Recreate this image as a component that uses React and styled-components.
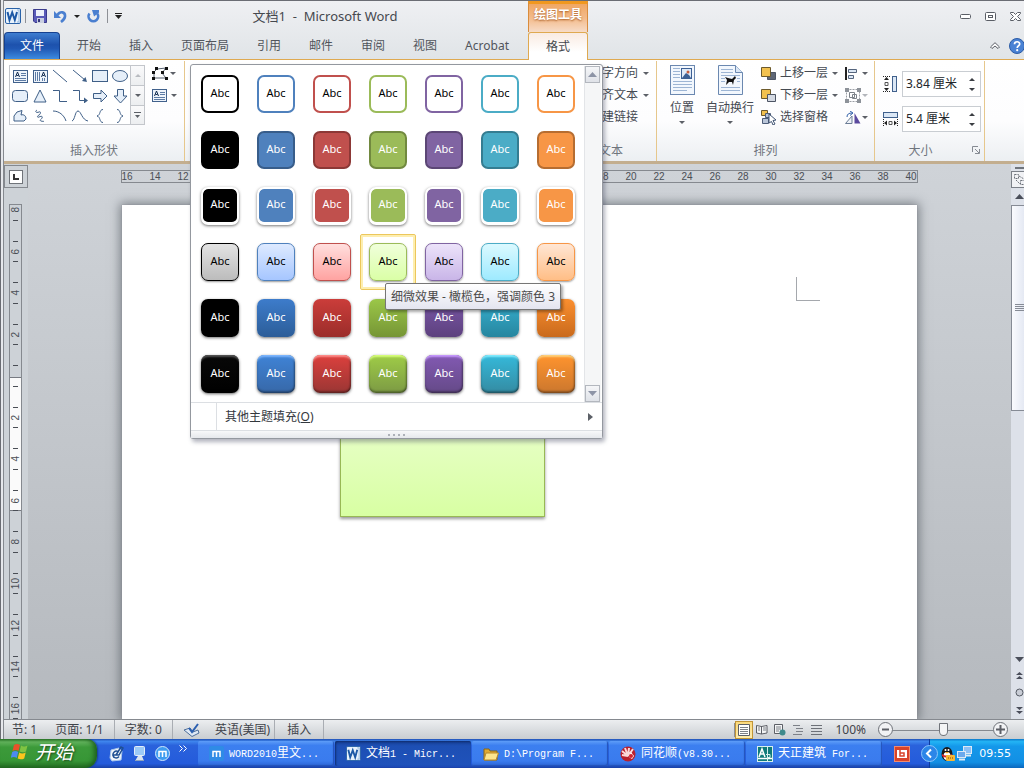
import React from "react";
import styled, { createGlobalStyle, css } from "styled-components";

const Global = createGlobalStyle`
  *, *::before, *::after { box-sizing: border-box; }
  html, body, #root { height: 100%; margin: 0; }
  body {
    font: 12px/16px "Noto Sans", "Noto Sans CJK SC", sans-serif;
    color: #3c4148;
    overflow: hidden;
  }
  button, input { font: inherit; color: inherit; }
  button { background: none; border: 0; padding: 0; cursor: default; white-space: nowrap; }
  svg { display: block; flex: none; }
`;

const Screen = styled.div`
  display: flex;
  flex-direction: column;
  height: 100vh;
`;

const WordWindow = styled.div`
  position: relative;
  flex: 1;
  min-height: 0;
  display: flex;
  flex-direction: column;
  padding-left: 4px;
  background: linear-gradient(to right, #6a6c72 0 1px, #e6e8ec 1px 3px, #85898f 3px 4px, #c4c8cd 4px);
`;

/* ---------- title bar and tabs ---------- */

const Header = styled.header`
  display: flex;
  height: 60px;
  flex: none;
  border-top: 1px solid #6b6d74;
  border-bottom: 1px solid #dfa950;
  background: linear-gradient(#eff0f3, #e0e4e7);
`;

const HeaderMain = styled.div`
  display: flex;
  flex-direction: column;
  width: 524px;
`;

const TitleRow = styled.div`
  display: flex;
  align-items: center;
  height: 31px;
  padding-bottom: 1px;
`;

const QuickAccess = styled.div`
  display: flex;
  align-items: center;
  gap: 7px;
  width: 118px;
  padding-left: 1px;
`;

const AppMark = styled.span`
  display: flex;
  align-items: center;
  gap: 4px;
`;

const Divider = styled.span`
  width: 1px;
  height: 14px;
  background: #8d9096;
`;

const DocTitle = styled.h1`
  flex: 1;
  margin: 0;
  font-size: 13px;
  font-weight: 400;
  line-height: 20px;
  text-align: center;
  white-space: pre;
  color: #45484e;
`;

const TabRow = styled.nav`
  display: flex;
  align-items: stretch;
  height: 27px;
`;

const FileTab = styled.button`
  width: 56px;
  margin-right: 3px;
  border: 1px solid #15408f;
  border-bottom: 0;
  border-radius: 4px 4px 0 0;
  background: linear-gradient(#3e7dd0, #1d52ad 45%, #2058b4 60%, #3d8be0);
  color: #fff;
`;

const Tab = styled.button`
  padding: 0 14px;
  color: #51555c;
`;

const ContextGroup = styled.div`
  display: flex;
  flex-direction: column;
  width: 60px;
  margin-bottom: -1px;
`;

const ContextTitle = styled.div`
  height: 31px;
  border: solid #d98c3c;
  border-width: 0 1px;
  border-top: 3px solid #f0981f;
  background: linear-gradient(#f0a763, #f3bb8b 50%, #f7dcc8);
  color: #fff;
  font-weight: 700;
  line-height: 21px;
  text-align: center;
  text-shadow: 0 1px 2px #a85a20;
`;

const ContextTab = styled.button`
  flex: 1;
  border: 1px solid #dfa950;
  border-bottom: 0;
  border-radius: 3px 3px 0 0;
  background: linear-gradient(#f9ebe2, #fff 70%);
  color: #45484e;
`;

const HeaderControls = styled.div`
  flex: 1;
  display: flex;
  flex-direction: column;
`;

const ControlRow = styled.div`
  display: flex;
  justify-content: flex-end;
  align-items: center;
  height: ${(p) => p.$h}px;
  gap: ${(p) => p.$gap}px;
  padding-right: ${(p) => p.$right || 0}px;
`;

/* ---------- ribbon ---------- */

const Ribbon = styled.div`
  display: flex;
  flex: none;
  height: 104px;
  padding-top: 1px;
  border-bottom: 3px solid #c3ae8f;
  background: linear-gradient(#fff, #fdfdfe 60%, #eceff2);
`;

const Group = styled.section`
  display: flex;
  flex-direction: column;
  width: ${(p) => p.$w}px;
  border-right: 1px solid #e6c78c;
`;

const GroupBody = styled.div`
  flex: 1;
  display: flex;
  padding: ${(p) => p.$pad || "1px 5px 0"};
  gap: ${(p) => p.$gap || 0}px;
  justify-content: ${(p) => p.$justify || "flex-start"};
`;

const GroupLabel = styled.div`
  position: relative;
  height: 22px;
  line-height: 24px;
  text-align: ${(p) => p.$align || "center"};
  color: #6f757d;
  padding-right: ${(p) => p.$right || 0}px;
`;

const Launcher = styled.button`
  position: absolute;
  right: 4px;
  top: 7px;
`;

const ShapeBox = styled.div`
  display: flex;
  height: 60px;
  margin-top: 3px;
  border: 1px solid #c3c6cb;
  background: #fff;
`;

const ShapeGrid = styled.div`
  display: grid;
  grid-template-columns: repeat(6, 20px);
  grid-auto-rows: 20px;
`;

const ShapeButton = styled.button`
  display: grid;
  place-items: center;
`;

const ShapeScroll = styled.div`
  display: grid;
  grid-template-rows: repeat(3, 1fr);
  width: 14px;
  border-left: 1px solid #c3c6cb;
  button { display: grid; place-items: center; background: linear-gradient(#fafafb, #eceef0); }
  button + button { border-top: 1px solid #c3c6cb; }
`;

const Stack = styled.div`
  display: flex;
  flex-direction: column;
  gap: ${(p) => p.$gap || 0}px;
`;

const CommandStack = styled(Stack)`
  margin-left: 7px;
`;

const SmallButton = styled.button`
  display: flex;
  align-items: center;
  height: 22px;
  gap: ${(p) => p.$gap || 4}px;
  color: #454a52;
`;

const BigButton = styled.button`
  display: flex;
  flex-direction: column;
  align-items: center;
  width: 48px;
  padding-top: 3px;
  gap: 5px;
  color: #454a52;
`;

const SizeField = styled.label`
  display: flex;
  align-items: center;
  gap: 4px;
  height: 26px;
`;

const SpinBox = styled.span`
  display: flex;
  align-items: stretch;
  width: 79px;
  height: 26px;
  border: 1px solid #c9cdd2;
  background: #fff;
  input {
    width: 60px;
    border: 0;
    padding: 0 0 0 3px;
    background: none;
    outline: 0;
    color: #22252a;
  }
`;

const SpinArrows = styled.span`
  flex: 1;
  display: flex;
  flex-direction: column;
  align-items: center;
  justify-content: center;
  gap: 7px;
`;

/* ---------- document area ---------- */

const Workspace = styled.main`
  position: relative;
  flex: 1;
  min-height: 0;
  display: flex;
  background: linear-gradient(#cfd3d8, #b5b9be);
`;

const RulerColumn = styled.div`
  display: flex;
  flex-direction: column;
  width: 24px;
  flex: none;
  background: #cdd2d7;
`;

const TabSelector = styled.button`
  display: grid;
  place-items: center;
  width: 24px;
  height: 23px;
  margin: 1px 0 16px;
  flex: none;
  border: 1px solid #85898f;
  span {
    display: grid;
    place-items: center;
    width: 14px;
    height: 14px;
    border: 1px solid #70747a;
    background: #fff;
  }
`;

const VRuler = styled.div`
  flex: 1;
  min-height: 0;
  width: 13px;
  margin-left: 5px;
  overflow: hidden;
  border: 1px solid #85898f;
  border-bottom: 0;
  background: linear-gradient(
    transparent 172px, #777b82 172px 173px, #fafafa 173px 305px, #777b82 305px 306px, transparent 306px
  );
`;

const VScale = styled.div`
  display: flex;
  flex-direction: column;
  height: 540px;
  margin-top: -16px;
`;

const VUnit = styled.div`
  flex: 1;
  display: flex;
  flex-direction: column;
  align-items: center;
  justify-content: space-between;
  padding: 10px 0;
  font: 10px/11px "Liberation Sans", sans-serif;
  color: #4a4e55;
  i { width: 5px; height: 1px; background: #4a4e55; }
  span { writing-mode: vertical-rl; transform: rotate(180deg); margin: -4px 0; }
`;

const Canvas = styled.div`
  flex: 1;
  min-width: 0;
  display: flex;
  flex-direction: column;
  align-items: center;
  padding-top: 6px;
  overflow: hidden;
`;

const HRuler = styled.div`
  display: flex;
  justify-content: center;
  width: 797px;
  height: 13px;
  flex: none;
  padding-right: 1px;
  overflow: hidden;
  border: 1px solid #85898f;
  font: 10px/11px "Liberation Sans", sans-serif;
  color: #4a4e55;
  span { flex: none; width: 28px; text-align: center; }
`;

const Page = styled.article`
  position: relative;
  flex: 1;
  width: 795px;
  margin-top: 22px;
  background: #fff;
  box-shadow: 0 0 1px #80858c, 0 0 10px 2px rgba(70, 76, 84, 0.6);
`;

const DrawnShape = styled.div`
  position: absolute;
  left: 218px;
  top: 166px;
  width: 205px;
  height: 146px;
  border: 1px solid #98b855;
  background: linear-gradient(#f1ffdd, #d8ffa3);
  box-shadow: 0 2px 3px rgba(0, 0, 0, 0.4);
`;

const MarginCorner = styled.div`
  position: absolute;
  right: 97px;
  top: 72px;
  width: 24px;
  height: 24px;
  border: solid #a5a8ad;
  border-width: 0 0 1px 1px;
`;

const ScrollColumn = styled.div`
  display: flex;
  flex-direction: column;
  align-items: center;
  width: 13px;
  flex: none;
  overflow: hidden;
  background: #dde1e9;
  padding-top: 3px;
`;

const SplitHandle = styled.div`
  width: 9px;
  height: 2px;
  margin-left: 4px;
  background: #70757d;
`;

const RulerToggle = styled.button`
  width: 17px;
  height: 17px;
  margin: 2px -4px 0 0;
  flex: none;
  border: 1px solid #7b8088;
  background: #f1f2f5;
`;

const ScrollButton = styled.button`
  display: grid;
  place-items: center;
  flex: none;
  height: ${(p) => p.$h || 17}px;
  width: 17px;
  margin-right: -4px;
`;

const Thumb = styled.div`
  display: grid;
  place-items: center;
  width: 17px;
  height: 206px;
  margin-right: -4px;
  flex: none;
  border: 1px solid #868b95;
  background: linear-gradient(to right, #fafbfe, #dfe4f0);
`;

const Spacer = styled.div`
  flex: 1;
`;

/* ---------- style gallery ---------- */

const Popup = styled.div`
  position: absolute;
  left: 190px;
  top: 64px;
  width: 413px;
  border: 1px solid #94989f;
  border-radius: 3px;
  background: #fff;
  box-shadow: 2px 3px 4px rgba(60, 64, 90, 0.4);
`;

const GalleryBody = styled.div`
  display: flex;
  padding: 1px 1px 0;
  border-bottom: 1px solid #dcdfe3;
`;

const SwatchGrid = styled.div`
  display: grid;
  grid-template-columns: repeat(7, 56px);
  grid-auto-rows: 56px;
  flex: none;
`;

const Cell = styled.div`
  display: grid;
  place-items: center;
  ${(p) =>
    p.$hot &&
    css`
      border: 1px solid #ecc75c;
      border-radius: 2px;
      box-shadow: inset 0 0 0 2px #fdeeb0;
    `}
`;

const rowStyles = {
  outline: css`
    background: #fff;
    border: 2px solid ${(p) => p.$c.base};
    color: #000;
  `,
  solid: css`
    background: ${(p) => p.$c.base};
    border: 2px solid ${(p) => p.$c.dark};
  `,
  framed: css`
    background: ${(p) => p.$c.base};
    border: 2px solid #fff;
    border-width: 2px 2px 3px;
    background-clip: padding-box;
    box-shadow: 0 1px 3px rgba(0, 0, 0, 0.55);
  `,
  subtle: css`
    background: linear-gradient(${(p) => p.$c.l1}, ${(p) => p.$c.l2});
    border: 1px solid ${(p) => p.$c.base};
    color: #000;
    box-shadow: 0 1px 2px rgba(0, 0, 0, 0.4);
  `,
  moderate: css`
    background: linear-gradient(${(p) => p.$c.m1}, ${(p) => p.$c.m2});
    box-shadow: 0 1px 3px rgba(0, 0, 0, 0.55);
  `,
  intense: css`
    background: linear-gradient(${(p) => p.$c.i1}, ${(p) => p.$c.i2});
    box-shadow: 0 1px 3px rgba(0, 0, 0, 0.6), inset 0 3px 2px -1px ${(p) => p.$c.hi},
      inset 0 -2px 2px rgba(0, 0, 0, 0.3), inset -1px 0 2px rgba(0, 0, 0, 0.35);
  `,
};

const Swatch = styled.button`
  width: 38px;
  height: 38px;
  border-radius: 7px;
  color: #fff;
  font: 11px/16px "Noto Sans", sans-serif;
  display: flex;
  justify-content: center;
  align-items: center;
  padding-bottom: 3px;
  ${(p) => rowStyles[p.$kind]}
`;

const GalleryScroll = styled.div`
  display: flex;
  flex-direction: column;
  justify-content: space-between;
  width: 17px;
  border-left: 1px solid #e3e5e8;
  background: #f5f6f7;
  button {
    display: grid;
    place-items: center;
    height: 17px;
    margin: 0 1px 0 0;
    border: 1px solid #b3b7be;
    background: linear-gradient(#f5f6f8, #dfe2e8);
  }
`;

const MenuItem = styled.button`
  display: flex;
  align-items: center;
  width: 100%;
  height: 27px;
  color: #33373d;
  i { width: 26px; height: 27px; border-right: 1px solid #dcdfe3; margin-right: 8px; }
  svg { margin: 0 9px 0 auto; }
`;

const Grip = styled.div`
  display: flex;
  align-items: center;
  justify-content: center;
  gap: 3px;
  height: 8px;
  border-top: 1px solid #dcdfe3;
  background: linear-gradient(#f7f8f9, #e6e8ec);
  i { width: 2px; height: 2px; background: #adb1b8; }
`;

const Tooltip = styled.div`
  position: absolute;
  left: 385px;
  top: 283px;
  padding: 4px 5px;
  border: 1px solid #767676;
  border-radius: 2px;
  background: linear-gradient(#fff, #e4e5f0);
  box-shadow: 2px 2px 3px rgba(0, 0, 0, 0.35);
  color: #4c4c4c;
  line-height: 17px;
  white-space: nowrap;
`;

/* ---------- status bar ---------- */

const StatusBar = styled.footer`
  display: flex;
  align-items: center;
  height: 20px;
  flex: none;
  border-top: 1px solid #85898f;
  background: linear-gradient(#eceef0, #c9cdd1);
  color: #3f434a;
`;

const StatusItem = styled.button`
  height: 19px;
  padding: 1px ${(p) => p.$pad || 10}px 0;
  border-right: ${(p) => (p.$line ? "1px solid #a9adb3" : "0")};
`;

const ViewButton = styled.button`
  display: grid;
  place-items: center;
  width: 18px;
  height: 18px;
  ${(p) =>
    p.$on &&
    css`
      border: 1px solid #c19537;
      background: linear-gradient(#fbd97c, #fcecae);
    `}
`;

const ZoomControl = styled.div`
  display: flex;
  align-items: center;
  margin-left: 2px;
  padding-right: 16px;
`;

const ZoomSlider = styled.input`
  appearance: none;
  width: 100px;
  height: 16px;
  margin: 0;
  background: linear-gradient(transparent 8px, #85898f 8px 9px, transparent 9px);
  &::-webkit-slider-thumb {
    appearance: none;
    width: 9px;
    height: 13px;
    border: 1px solid #70747a;
    border-radius: 1px 1px 5px 5px;
    background: #f4f5f6;
  }
`;

const RoundButton = styled.button`
  display: grid;
  place-items: center;
  width: 15px;
  height: 15px;
  border: 1px solid #6d7178;
  border-radius: 50%;
  background: #f1f2f4;
`;

/* ---------- taskbar ---------- */

const Taskbar = styled.div`
  display: flex;
  align-items: stretch;
  height: 29px;
  flex: none;
  background: linear-gradient(#1f4fb4, #3f86ee 8%, #2a62dc 22%, #245bdb 85%, #1a41a5);
  color: #fff;
`;

const StartButton = styled.button`
  display: flex;
  align-items: center;
  gap: 6px;
  width: 97px;
  padding: 0 0 3px 11px;
  border-radius: 0 10px 12px 0;
  background: linear-gradient(#2e7d2c, #62b35c 10%, #3c9a3a 28%, #379636 75%, #226a21);
  box-shadow: inset -4px 0 5px -1px #1d5f1d, 1px 0 2px #163c8f;
  font-size: 19px;
  font-style: italic;
  line-height: 26px;
  color: #fff;
  text-shadow: 1px 1px 2px #1c4a1b;
`;

const QuickLaunch = styled.div`
  display: flex;
  align-items: center;
  gap: 9px;
  width: 101px;
  padding-left: 12px;
`;

const MoreButton = styled.button`
  align-self: flex-start;
  margin-top: 6px;
`;

const Tasks = styled.div`
  flex: 1;
  display: flex;
  min-width: 0;
`;

const TaskButton = styled.button`
  flex: 0 1 136px;
  display: flex;
  align-items: center;
  gap: 5px;
  min-width: 0;
  height: 25px;
  margin: 2px 1px 0 0;
  padding-left: 11px;
  border-radius: 2px;
  background: ${(p) =>
    p.$on ? "linear-gradient(#173f95, #1d4fb4 20%, #1f52bb)" : "linear-gradient(#5e9df8, #3c7ff0 18%, #3a7bee 80%, #2c64d4)"};
  box-shadow: ${(p) => (p.$on ? "inset 1px 1px 2px #0f2d70" : "inset -1px -1px 1px #2453b8")};
  color: #fff;
  span { white-space: pre; }
  code { font: 10px/16px "Liberation Mono", monospace; }
`;

const InputMethod = styled.button`
  display: grid;
  place-items: center;
  width: 26px;
  margin-right: 14px;
`;

const Tray = styled.div`
  display: flex;
  align-items: center;
  gap: 2px;
  width: 95px;
  padding-right: 13px;
  border-left: 1px solid #0c3a9e;
  background: linear-gradient(#0d79c9, #23b4f5 9%, #1498ea 25%, #128fe4 80%, #0b67bd);
  button:first-child { margin-left: -9px; }
  time { margin-left: auto; font: 11px/16px "DejaVu Sans", sans-serif; }
`;

/* ---------- icons ---------- */

const Svg = ({ w, h, children }) => (
  <svg width={w} height={h} viewBox={`0 0 ${w} ${h}`} fill="none" aria-hidden="true">
    {children}
  </svg>
);

const Caret = ({ c = "#5c6067", big }) =>
  big ? (
    <Svg w={9} h={5}><path d="M0 0h9L4.500 5z" fill={c} /></Svg>
  ) : (
    <Svg w={6} h={3}><path d="M0 0h6L3 3z" fill={c} /></Svg>
  );
const CaretUp = ({ c = "#3a3d42", big }) =>
  big ? (
    <Svg w={9} h={5}><path d="M0 5h9L4.500 0z" fill={c} /></Svg>
  ) : (
    <Svg w={6} h={3}><path d="M0 3h6L3 0z" fill={c} /></Svg>
  );

const WordIcon = ({ s = 16 }) => (
  <svg width={s} height={s} viewBox="0 0 16 16" aria-hidden="true">
    <rect x=".5" y=".5" width="15" height="15" rx="1.500" fill="#e8f2fc" stroke="#2a62a8" />
    <path d="M12 2h2v12h-2" fill="none" stroke="#8fb4dc" />
    <path d="M2.500 4l2 8 2.700-7.500L9.800 12 12 4" fill="none" stroke="#1c58a6" strokeWidth="2" />
  </svg>
);

const SaveIcon = () => (
  <Svg w={14} h={14}>
    <path d="M.5.5h13v13H2l-1.500-1.500z" fill="#5a5bb8" stroke="#3b3b8c" />
    <rect x="3" y="1" width="8" height="6" fill="#eef2fb" />
    <rect x="4" y="9" width="7" height="5" fill="#c9cfe0" />
    <rect x="5" y="10" width="2" height="3" fill="#37377c" />
  </Svg>
);

const UndoIcon = () => (
  <Svg w={13} h={13}>
    <path d="M3.500 5C6 1 11.500 1.500 11 6.500c-.3 2.500-2 4-4 5.500" stroke="#4a7fd0" strokeWidth="2.600" />
    <path d="M0 1v7h7z" fill="#4a7fd0" />
  </Svg>
);

const RedoIcon = () => (
  <Svg w={13} h={13}>
    <path d="M2.500 3.500A4.800 4.800 0 1 0 10.200 3.500" stroke="#4a7fd0" strokeWidth="2.600" />
    <path d="M5 0h7v2.500L7 6.500z" fill="#4a7fd0" />
  </Svg>
);

const TextBoxIcon = ({ vertical }) => (
  <Svg w={15} h={13}>
    <rect x=".5" y=".5" width="14" height="12" fill="#eef4fb" stroke="#41618c" />
    {vertical ? (
      <>
        <path d="M2.500 2v9M4.500 2v9M6.500 2v9M9.500 8v3M11.500 8v3" stroke="#5d7ba4" />
        <path d="M8.500 7l2-5 2 5M9.500 5.500h2" stroke="#122c50" />
      </>
    ) : (
      <>
        <path d="M8 3.500h5M8 5.500h5M2 8.500h11M2 10.500h11" stroke="#5d7ba4" />
        <path d="M2.500 7l2-5 2 5M3.500 5.500h2" stroke="#122c50" />
      </>
    )}
  </Svg>
);

const S = "#3f5f87";
const F = "#e6eff9";
const shapes = [
  ["文本框", <TextBoxIcon />],
  ["竖排文本框", <TextBoxIcon vertical />],
  ["直线", <Svg w={16} h={16}><path d="M1 2l14 12" stroke={S} /></Svg>],
  ["箭头", <Svg w={16} h={16}><path d="M1 2l12 10" stroke={S} /><path d="M15 14l-5-1 3.500-4z" fill={S} /></Svg>],
  ["矩形", <Svg w={16} h={12}><rect x=".5" y=".5" width="15" height="11" fill={F} stroke={S} /></Svg>],
  ["椭圆", <Svg w={16} h={12}><ellipse cx="8" cy="6" rx="7.500" ry="5.500" fill={F} stroke={S} /></Svg>],
  ["圆角矩形", <Svg w={16} h={12}><rect x=".5" y=".5" width="15" height="11" rx="3" fill={F} stroke={S} /></Svg>],
  ["等腰三角形", <Svg w={14} h={14}><path d="M7 1l6 12H1z" fill={F} stroke={S} /></Svg>],
  ["肘形连接符", <Svg w={16} h={14}><path d="M1 1.500h6.500v11H15" stroke={S} /></Svg>],
  ["肘形箭头", <Svg w={16} h={14}><path d="M1 1.500h6.500v10H13" stroke={S} /><path d="M12 8.500l4 3-4 3z" fill={S} /></Svg>],
  ["右箭头", <Svg w={15} h={14}><path d="M.5 4.500H8V1l6 6-6 6V9.500H.5z" fill={F} stroke={S} /></Svg>],
  ["下箭头", <Svg w={15} h={15}><path d="M4.500.5h6V7H14l-6.500 7L1 7h3.500z" fill={F} stroke={S} /></Svg>],
  ["任意多边形", <Svg w={14} h={12}><path d="M1 11V6l3-4 5-1.500L8 5c3-1 5 1 5 4l-2 2z" fill={F} stroke={S} /></Svg>],
  ["自由曲线", <Svg w={12} h={14}><path d="M3 1c-3 2 0 3 2 2s2 2 0 3-2 3 0 2 4-1 3 1-3 2-1 3 3-1 2 1" stroke={S} /></Svg>],
  ["弧形", <Svg w={16} h={12}><path d="M1 1c6 0 11 4 13 10" stroke={S} /></Svg>],
  ["曲线", <Svg w={16} h={12}><path d="M0 11C3 10 3 1 6 1s4 9 10 10" stroke={S} /></Svg>],
  ["左大括号", <Svg w={8} h={14}><path d="M7 .5C3 .5 5 6 1 7c4 1 2 6.500 6 6.500" stroke={S} /></Svg>],
  ["右大括号", <Svg w={8} h={14}><path d="M1 .5c4 0 2 5.500 6 6.500-4 1-2 6.500-6 6.500" stroke={S} /></Svg>],
];

const EditPointsIcon = () => (
  <Svg w={16} h={13}>
    <path d="M5 2l9-1-4 5 4 5H2V5z" stroke="#56616f" />
    <path d="M3 0h3v3H3zM13 0h3v3h-3zM9 4h3v3H9zM0 4h3v3H0zM0 10h3v3H0zM13 10h3v3h-3z" fill="#111" />
  </Svg>
);

const PositionIcon = () => (
  <Svg w={25} h={30}>
    <rect x=".5" y=".5" width="24" height="29" fill="#f2f7fd" stroke="#6b88b0" />
    <path d="M3 3.500h7M3 6.500h7M3 9.500h7M3 12.500h7M3 16.500h19M3 19.500h19M3 22.500h19M3 25.500h14" stroke="#9db5d4" />
    <rect x="11.500" y="3.500" width="10" height="10" fill="#dfeaf8" stroke="#3c5f94" />
    <path d="M12 13l4-5 3 2 2 3z" fill="#3c5f94" />
    <circle cx="18" cy="7" r="1.500" fill="#c55b3c" />
  </Svg>
);

const WrapIcon = () => (
  <Svg w={25} h={30}>
    <path d="M.5.5h17l7 7v22H.5z" fill="#f2f7fd" stroke="#6b88b0" />
    <path d="M17.500.5v7h7" fill="#dbe7f5" stroke="#6b88b0" />
    <path d="M3 4.500h12M3 7.500h12M3 10.500h19M3 13.500h4M19 13.500h3M3 16.500h4M19 16.500h3M3 22.500h19M3 25.500h19" stroke="#9db5d4" />
    <path d="M7 12l3 1 4 1 3-3 1 2-2 2-1 5-1-3h-3l-3 3 1-5z" fill="#111" />
  </Svg>
);

const LayerIcon = ({ back }) => {
  const gold = <path d="M.5.5h9v9h-9z" fill="#f2c14e" stroke="#6d5a2c" />;
  const grey = <path d="M6.500 5.500h8v7h-8z" fill={back ? "#d4d9e2" : "#5e6675"} stroke="#4d5564" />;
  return <Svg w={15} h={13}>{back ? <>{gold}{grey}</> : <>{grey}{gold}</>}</Svg>;
};

const SelectPaneIcon = () => (
  <Svg w={16} h={15}>
    <path d="M.5.5h6v5h-6z" fill="#f2c14e" stroke="#6d5a2c" />
    <path d="M4.500 3.500h5v4h-5zM1.500 8.500h6v5h-6z" fill="#b9c5d8" stroke="#4d5d78" />
    <path d="M8 4l7 6-3 .5 2 3.500-2 1-1.500-3.500L8 13z" fill="#fff" stroke="#3f5372" />
  </Svg>
);

const AlignIcon = () => (
  <Svg w={13} h={13}>
    <path d="M1 0v13" stroke="#222" strokeWidth="2" />
    <path d="M3.500 2.500h8v3h-8zM3.500 8.500h5v3h-5z" fill="#dbe7f5" stroke="#55657d" />
  </Svg>
);

const GroupIcon = () => (
  <Svg w={16} h={15}>
    <path d="M1.500 1.500h13v12h-13z" stroke="#9a9ea5" strokeDasharray="2 1" />
    <path d="M4.500 4.500h5v5h-5zM7.500 6.500h4v4h-4z" stroke="#7d8289" />
    <path d="M0 0h4v4H0zM12 0h4v4h-4zM0 11h4v4H0zM12 11h4v4h-4z" fill="#8d9299" />
  </Svg>
);

const RotateIcon = () => (
  <Svg w={16} h={13}>
    <path d="M7 5v7.500H.5z" fill="#eef2f8" stroke="#6b7c95" />
    <path d="M9.500 2l6 10.500h-6z" fill="#5b4a9e" />
    <path d="M2 6c0-3 2-4 5-4M5 0l3 2-3 2.500" stroke="#2f5fa8" />
  </Svg>
);

const HeightIcon = () => (
  <Svg w={15} h={16}>
    <rect x="9.500" y=".5" width="4" height="15" fill="#dbe7f5" stroke="#41618c" />
    <path d="M0 .5h8M0 15.500h8" stroke="#222" strokeDasharray="1 1" />
    <path d="M3.500 1l2.500 3H1zM3.500 15l2.500-3H1z" fill="#222" />
    <path d="M2 6.500h3v3H2z" stroke="#555" />
  </Svg>
);

const WidthIcon = () => (
  <Svg w={15} h={16}>
    <rect x=".5" y="1.500" width="14" height="5" fill="#dbe7f5" stroke="#41618c" />
    <path d="M.5 8v8M14.500 8v8" stroke="#222" strokeDasharray="1 1" />
    <path d="M1 12l3-2.500v5zM14 12l-3-2.500v5z" fill="#222" />
    <path d="M6 10.500h3v3H6z" stroke="#555" />
  </Svg>
);

const XpFlag = () => (
  <Svg w={18} h={18}>
    <path d="M3 2c2-1.500 4-1.500 6 0L7.500 8C5.500 6.500 3.500 6.800 1.500 8z" fill="#e8512a" />
    <path d="M10 2.500c2 1.200 4 1.200 6.500 0L15 8.500c-2.500 1.200-4.500 1-6.500 0z" fill="#7fc342" />
    <path d="M1.200 9c2-1.300 4-1.300 6 0l-1.500 6c-2-1.500-4-1.200-6 0z" fill="#4d8af0" />
    <path d="M8.200 9.500c2 1.200 4.200 1.200 6.500 0l-1.500 6c-2.500 1.200-4.500 1-6.500 0z" fill="#fbc51d" />
  </Svg>
);

const ShowDesktopIcon = () => (
  <Svg w={15} h={16}>
    <path d="M2 4l8-2 3 3-1 9-9 1-2-3z" fill="#f2f6fb" stroke="#a8c6ea" />
    <path d="M9 5.500C6 4 3.500 7 4 9.500s4 3.500 6 1M4.500 9H10L14 2l-2-1-5 8" stroke="#1e4f92" strokeWidth="1.500" />
  </Svg>
);

const ScreenIcon = () => (
  <Svg w={13} h={16}>
    <rect x="1.500" y=".5" width="10" height="9" rx="1" fill="#9ccaf7" stroke="#e3edf8" />
    <path d="M5 10h4l2 5H2z" fill="#dbe4ee" />
    <path d="M2 14.500h9" stroke="#8fa3bb" />
  </Svg>
);

const BrowserIcon = ({ square }) => (
  <Svg w={15} h={15}>
    {square ? <rect width="15" height="15" rx="2" fill="#2f8be6" /> : <circle cx="7.500" cy="7.500" r="7" fill="#3f9cf0" stroke="#cfe7fd" />}
    <path d="M4 11V5.500h7V11M7.500 6v5" stroke="#fff" strokeWidth="1.500" />
  </Svg>
);

const FolderIcon = () => (
  <Svg w={16} h={14}>
    <path d="M1 2h5l1 2h7v9H1z" fill="#e0aa32" stroke="#8a6715" />
    <path d="M3 6h12.500L13 13H1z" fill="#fce58e" stroke="#b8892a" />
  </Svg>
);

const FlowerIcon = () => (
  <Svg w={16} h={16}>
    <circle cx="8" cy="8" r="7.500" fill="#b9202c" />
    <path d="M8 10L2 5M8 10L5 2M8 10l1-8M8 10l5-7M8 10L2 9" stroke="#fbd9d9" strokeWidth="2" />
    <path d="M11 6l3 4-2 3-3-2z" fill="#fff" />
    <circle cx="11" cy="10" r="2" fill="#d2222d" />
  </Svg>
);

const CadIcon = () => (
  <Svg w={16} h={16}>
    <rect x=".5" y=".5" width="15" height="15" fill="#0f7b7a" stroke="#d7efec" />
    <path d="M2 11l3-8 3 8M3 8h4M1 12.500h14" stroke="#fff" strokeWidth="1.500" />
    <path d="M10.500 1v14M9 8.500h4v3h-3" stroke="#d7efec" />
  </Svg>
);

const PenguinIcon = () => (
  <Svg w={15} h={16}>
    <ellipse cx="7" cy="8" rx="5.500" ry="7" fill="#1a1a1a" />
    <ellipse cx="7" cy="10" rx="3.500" ry="4" fill="#fff" />
    <path d="M2 8c3 2 7 2 10 0v2c-3 2-7 2-10 0z" fill="#d8262a" />
    <path d="M5 6h4l-2 1.500z" fill="#f6a81c" />
    <circle cx="5.500" cy="4" r="1" fill="#fff" /><circle cx="8.500" cy="4" r="1" fill="#fff" />
    <rect x="6" y="9" width="9" height="6" rx="1" fill="#f7b733" />
    <path d="M8 12h1M10 12h1M12 12h1" stroke="#7a4d08" />
  </Svg>
);

const NetworkIcon = () => (
  <Svg w={15} h={15}>
    <rect x="6.500" y=".5" width="8" height="7" fill="#8cc0f5" stroke="#dce9f6" />
    <rect x=".5" y="5.500" width="8" height="6" fill="#6ba9ec" stroke="#dce9f6" />
    <path d="M2 13.500h6M9 9.500h5" stroke="#dce9f6" strokeWidth="2" />
  </Svg>
);

/* ---------- data ---------- */

const black = { base: "#000", dark: "#000", l1: "#e3e3e3", l2: "#bcbcbc", m1: "#000", m2: "#000", i1: "#080808", i2: "#000", hi: "#555" };
const palette = [
  black,
  { base: "#4f81bd", dark: "#385d8a", l1: "#deeaff", l2: "#a6c6ff", m1: "#3d7ccb", m2: "#2c5d98", i1: "#3f83d6", i2: "#3768a8", hi: "#7fb8ff" },
  { base: "#c0504d", dark: "#8c3836", l1: "#ffdfde", l2: "#ffa3a1", m1: "#cb3d3a", m2: "#9b2d2a", i1: "#dc403d", i2: "#9a3634", hi: "#ff8f8c" },
  { base: "#9bbb59", dark: "#71893f", l1: "#f0ffdb", l2: "#daffa6", m1: "#9bc748", m2: "#769535", i1: "#9fcc47", i2: "#7c9a44", hi: "#d8ff7c" },
  { base: "#8064a2", dark: "#5c4776", l1: "#ece3fa", l2: "#c9b5e8", m1: "#7b57a8", m2: "#5d417e", i1: "#8259b2", i2: "#654a88", hi: "#c89aff" },
  { base: "#4bacc6", dark: "#357d91", l1: "#dbf9ff", l2: "#9eeaff", m1: "#36b0d0", m2: "#27869f", i1: "#35b9da", i2: "#348ba2", hi: "#84ecff" },
  { base: "#f79646", dark: "#b66d31", l1: "#ffe6d4", l2: "#ffbe86", m1: "#fb8f2f", m2: "#c96a1c", i1: "#ff942e", i2: "#cb772e", hi: "#ffd27c" },
];
const kinds = ["outline", "solid", "framed", "subtle", "moderate", "intense"];
const hNumbers = Array.from({ length: 29 }, (_, i) => Math.abs(i - 8) * 2);
const vNumbers = Array.from({ length: 13 }, (_, i) => Math.abs(i - 4) * 2);
const tabs = ["开始", "插入", "页面布局", "引用", "邮件", "审阅", "视图", "Acrobat"];

const SizeInput = ({ label, icon, value }) => (
  <SizeField>
    {icon}
    <SpinBox>
      <input aria-label={label} defaultValue={value} />
      <SpinArrows><CaretUp /><Caret c="#3a3d42" /></SpinArrows>
    </SpinBox>
  </SizeField>
);

export default function App() {
  return (
    <Screen>
      <Global />
      <WordWindow>
        <Header>
          <HeaderMain>
            <TitleRow>
              <QuickAccess>
                <AppMark><WordIcon /><Divider /></AppMark>
                <button aria-label="保存"><SaveIcon /></button>
                <button aria-label="撤消"><UndoIcon /></button>
                <Caret c="#222" />
                <button aria-label="重复"><RedoIcon /></button>
                <Divider />
                <Svg w={7} h={6}><path d="M0 .5h7" stroke="#222" /><path d="M0 2h7L3.500 6z" fill="#222" /></Svg>
              </QuickAccess>
              <DocTitle>{"文档1  -  Microsoft Word"}</DocTitle>
            </TitleRow>
            <TabRow>
              <FileTab>文件</FileTab>
              {tabs.map((t) => <Tab key={t}>{t}</Tab>)}
            </TabRow>
          </HeaderMain>
          <ContextGroup>
            <ContextTitle>绘图工具</ContextTitle>
            <ContextTab>格式</ContextTab>
          </ContextGroup>
          <HeaderControls>
            <ControlRow $h={31} $gap={14} $right={3}>
              <button aria-label="最小化"><Svg w={11} h={5}><rect x=".5" y=".5" width="10" height="4" rx="1" fill="#fff" stroke="#5a5e66" /></Svg></button>
              <button aria-label="还原"><Svg w={11} h={9}><rect x=".5" y=".5" width="10" height="8" rx="1" fill="#fff" stroke="#5a5e66" /><rect x="3.500" y="3.500" width="4" height="2" stroke="#5a5e66" /></Svg></button>
              <button aria-label="关闭"><Svg w={11} h={9}><path d="M.5.5h3l2 2 2-2h3v1l-3 3 3 3v1h-3l-2-2-2 2h-3v-1l3-3-3-3z" fill="#fff" stroke="#5a5e66" /></Svg></button>
            </ControlRow>
            <ControlRow $h={27} $gap={9}>
              <button aria-label="功能区最小化"><Svg w={10} h={7}><path d="M.5 5L5 .7 9.500 5 8 6.500 5 4 2 6.500z" fill="#fff" stroke="#5a5e66" /></Svg></button>
              <button aria-label="帮助">
                <Svg w={15} h={16}>
                  <circle cx="8" cy="8" r="7.500" fill="#4a82d4" stroke="#2c5ca6" />
                  <path d="M5.500 6.200C5.500 3 10.700 3 10.700 6c0 1.800-2.500 1.800-2.500 4" stroke="#fff" strokeWidth="1.700" />
                  <circle cx="8.200" cy="12.200" r="1.100" fill="#fff" />
                </Svg>
              </button>
            </ControlRow>
          </HeaderControls>
        </Header>

        <Ribbon>
          <Group $w={181}>
            <GroupBody $gap={7}>
              <ShapeBox>
                <ShapeGrid>
                  {shapes.map(([name, icon]) => <ShapeButton key={name} aria-label={name}>{icon}</ShapeButton>)}
                </ShapeGrid>
                <ShapeScroll>
                  <button aria-label="向上"><CaretUp c="#b9bcc1" /></button>
                  <button aria-label="向下"><Caret /></button>
                  <button aria-label="更多形状"><Svg w={7} h={6}><path d="M0 .5h7" stroke="#5c6067" /><path d="M1 3h5L3.500 6z" fill="#5c6067" /></Svg></button>
                </ShapeScroll>
              </ShapeBox>
              <Stack>
                <SmallButton $gap={2} aria-label="编辑形状"><EditPointsIcon /><Caret /></SmallButton>
                <SmallButton aria-label="绘制文本框"><TextBoxIcon /><Caret /></SmallButton>
              </Stack>
            </GroupBody>
            <GroupLabel>插入形状</GroupLabel>
          </Group>

          <Group $w={472}>
            <GroupBody $justify="flex-end" $pad="1px 7px 0">
              <Stack>
                <SmallButton $gap={5}>文字方向<Caret /></SmallButton>
                <SmallButton $gap={5}>对齐文本<Caret /></SmallButton>
                <SmallButton>创建链接</SmallButton>
              </Stack>
            </GroupBody>
            <GroupLabel $align="right" $right={33}>文本</GroupLabel>
          </Group>

          <Group $w={218}>
            <GroupBody $pad="1px 0 0 1px">
              <Stack><BigButton><PositionIcon />位置<Caret /></BigButton></Stack>
              <Stack><BigButton><WrapIcon />自动换行<Caret /></BigButton></Stack>
              <CommandStack>
                <SmallButton><LayerIcon />上移一层<Caret /></SmallButton>
                <SmallButton><LayerIcon back />下移一层<Caret /></SmallButton>
                <SmallButton $gap={3}><SelectPaneIcon />选择窗格</SmallButton>
              </CommandStack>
              <CommandStack>
                <SmallButton aria-label="对齐"><AlignIcon /><Caret /></SmallButton>
                <SmallButton $gap={1} aria-label="组合"><GroupIcon /><Caret c="#b3b6bb" /></SmallButton>
                <SmallButton $gap={1} aria-label="旋转"><RotateIcon /><Caret /></SmallButton>
              </CommandStack>
            </GroupBody>
            <GroupLabel>排列</GroupLabel>
          </Group>

          <Group $w={110}>
            <GroupBody $pad="10px 0 0 8px">
              <Stack $gap={9}>
                <SizeInput label="形状高度" icon={<HeightIcon />} value="3.84 厘米" />
                <SizeInput label="形状宽度" icon={<WidthIcon />} value="5.4 厘米" />
              </Stack>
            </GroupBody>
            <GroupLabel $right={18}>
              大小
              <Launcher aria-label="大小选项"><Svg w={8} h={8}><path d="M.5 6V.5H6M3 3l4 4M7.500 3v4.500H3" stroke="#858a92" /></Svg></Launcher>
            </GroupLabel>
          </Group>
        </Ribbon>

        <Workspace>
          <RulerColumn>
            <TabSelector aria-label="制表符"><span><Svg w={6} h={6}><path d="M1 0v5h5" stroke="#333" strokeWidth="2" /></Svg></span></TabSelector>
            <VRuler>
              <VScale>
                {vNumbers.map((n, i) => <VUnit key={i}><i /><span>{n || ""}</span><i /></VUnit>)}
              </VScale>
            </VRuler>
          </RulerColumn>
          <Canvas>
            <HRuler>{hNumbers.map((n, i) => <span key={i}>{n || ""}</span>)}</HRuler>
            <Page>
              <DrawnShape />
              <MarginCorner />
            </Page>
          </Canvas>
          <ScrollColumn>
            <SplitHandle />
            <RulerToggle aria-label="标尺">
              <Svg w={15} h={15}><path d="M2.500 2.500h4v4h-4zM8.500 8.500h4v4h-4zM7 4l5 3M4 8l4 4" stroke="#6d727a" strokeDasharray="2 1" /></Svg>
            </RulerToggle>
            <ScrollButton aria-label="向上滚动"><CaretUp big c="#4a4e5a" /></ScrollButton>
            <Thumb><Svg w={9} h={8}><path d="M0 .5h9M0 2.500h9M0 4.500h9M0 6.500h9" stroke="#868b95" /></Svg></Thumb>
            <Spacer />
            <ScrollButton $h={16} aria-label="向下滚动"><Caret big c="#4a4e5a" /></ScrollButton>
            <ScrollButton aria-label="前一页"><Svg w={7} h={7}><path d="M0 3h7L3.500 0zM0 7h7L3.500 4z" fill="#4a4e5a" /></Svg></ScrollButton>
            <ScrollButton aria-label="选择浏览对象"><Svg w={9} h={9}><circle cx="4.500" cy="4.500" r="3.500" stroke="#555a64" fill="#c9cdd6" /></Svg></ScrollButton>
            <ScrollButton $h={18} aria-label="下一页"><Svg w={7} h={7}><path d="M0 0h7L3.500 3zM0 4h7L3.500 7z" fill="#4a4e5a" /></Svg></ScrollButton>
          </ScrollColumn>
        </Workspace>

        <StatusBar>
          <StatusItem $pad={8}>节: 1</StatusItem>
          <StatusItem $line>页面: 1/1</StatusItem>
          <StatusItem $line>字数: 0</StatusItem>
          <StatusItem aria-label="校对">
            <Svg w={18} h={14}>
              <path d="M1 7l6-2 3 4 5-2 1 3-7 3.500z" fill="#dfe9f5" stroke="#4d6d99" />
              <path d="M6 5l3 4 6-8" stroke="#2c5fb0" strokeWidth="2" />
            </Svg>
          </StatusItem>
          <StatusItem $pad={4} $line>英语(美国)</StatusItem>
          <StatusItem $pad={12} $line>插入</StatusItem>
          <Spacer />
          <Divider />
          <ViewButton $on aria-label="页面视图"><Svg w={12} h={12}><path d="M.5.5h11v11H.5z" fill="#fff" stroke="#5c5f66" /><path d="M2 3.500h8M2 5.500h8M2 7.500h8M2 9.500h8" stroke="#7d8188" /></Svg></ViewButton>
          <ViewButton aria-label="阅读版式"><Svg w={12} h={11}><path d="M.5 1.500l5 1 5.500-1v7.500l-5.500 1-5-1zM5.500 2v8" fill="#f4f5f6" stroke="#5c5f66" /><path d="M2 4h2M2 6h2M7 4h3M7 6h3" stroke="#7d8188" /></Svg></ViewButton>
          <ViewButton aria-label="Web 版式"><Svg w={12} h={12}><path d="M.5.5h8v9h-8z" fill="#f4f5f6" stroke="#5c5f66" /><path d="M2 3h5M2 5h5M2 7h3" stroke="#7d8188" /><circle cx="8.500" cy="8.500" r="3" fill="#3f8a8c" /></Svg></ViewButton>
          <ViewButton aria-label="大纲视图"><Svg w={11} h={11}><path d="M0 1.500h7M3 4.500h7M3 7.500h7M0 10.500h9" stroke="#7d8188" /></Svg></ViewButton>
          <ViewButton aria-label="草稿"><Svg w={11} h={11}><path d="M0 1.500h11M0 4.500h11M0 7.500h11M0 10.500h11" stroke="#6d7178" /></Svg></ViewButton>
          <StatusItem>100%</StatusItem>
          <ZoomControl>
            <RoundButton aria-label="缩小"><Svg w={9} h={9}><path d="M1 4.500h7" stroke="#5c5f66" strokeWidth="2" /></Svg></RoundButton>
            <ZoomSlider type="range" aria-label="显示比例" min="0" max="100" defaultValue="50" />
            <RoundButton aria-label="放大"><Svg w={9} h={9}><path d="M0 4.500h9M4.500 0v9" stroke="#5c5f66" strokeWidth="2" /></Svg></RoundButton>
          </ZoomControl>
        </StatusBar>

        <Popup>
          <GalleryBody>
            <SwatchGrid>
              {kinds.map((kind, r) =>
                palette.map((c, i) => (
                  <Cell key={kind + i} $hot={r === 3 && i === 3}>
                    <Swatch $kind={kind} $c={c}>Abc</Swatch>
                  </Cell>
                ))
              )}
            </SwatchGrid>
            <GalleryScroll>
              <button aria-label="向上滚动样式"><CaretUp big c="#8d94a6" /></button>
              <button aria-label="向下滚动样式"><Caret big c="#8d94a6" /></button>
            </GalleryScroll>
          </GalleryBody>
          <MenuItem>
            <i />
            <span>其他主题填充(<u>O</u>)</span>
            <Svg w={5} h={8}><path d="M0 0v8l5-4z" fill="#5c6067" /></Svg>
          </MenuItem>
          <Grip><i /><i /><i /><i /></Grip>
        </Popup>
        <Tooltip role="tooltip">细微效果 - 橄榄色，强调颜色 3</Tooltip>
      </WordWindow>

      <Taskbar>
        <StartButton><XpFlag />开始</StartButton>
        <QuickLaunch>
          <button aria-label="显示桌面"><ShowDesktopIcon /></button>
          <button aria-label="屏幕"><ScreenIcon /></button>
          <button aria-label="浏览器"><BrowserIcon /></button>
          <MoreButton aria-label="更多"><Svg w={9} h={7}><path d="M.5.5l3 3-3 3M4.500.5l3 3-3 3" stroke="#fff" /></Svg></MoreButton>
        </QuickLaunch>
        <Tasks>
          <TaskButton><BrowserIcon square /><span><code>WORD2010</code>里文<code>...</code></span></TaskButton>
          <TaskButton $on><WordIcon s={15} /><span>文档<code>1 - Micr...</code></span></TaskButton>
          <TaskButton><FolderIcon /><span><code>D:\Program F...</code></span></TaskButton>
          <TaskButton><FlowerIcon /><span>同花顺<code>(v8.30...</code></span></TaskButton>
          <TaskButton><CadIcon /><span>天正建筑<code> For...</code></span></TaskButton>
        </Tasks>
        <InputMethod aria-label="输入法"><Svg w={16} h={16}><rect x=".5" y=".5" width="15" height="15" fill="#d8432a" stroke="#f08a70" /><path d="M3 4h10v8H3z" fill="#fff" /><path d="M6 4v6h4V7H6" stroke="#d8432a" strokeWidth="1.500" /></Svg></InputMethod>
        <Tray>
          <button aria-label="显示隐藏的图标">
            <Svg w={17} h={17}><circle cx="8.500" cy="8.500" r="8" fill="#2c86e8" stroke="#8cc6fa" /><path d="M10 4.500l-4 4 4 4" stroke="#fff" strokeWidth="2" /></Svg>
          </button>
          <PenguinIcon />
          <NetworkIcon />
          <time>09:55</time>
        </Tray>
      </Taskbar>
    </Screen>
  );
}
